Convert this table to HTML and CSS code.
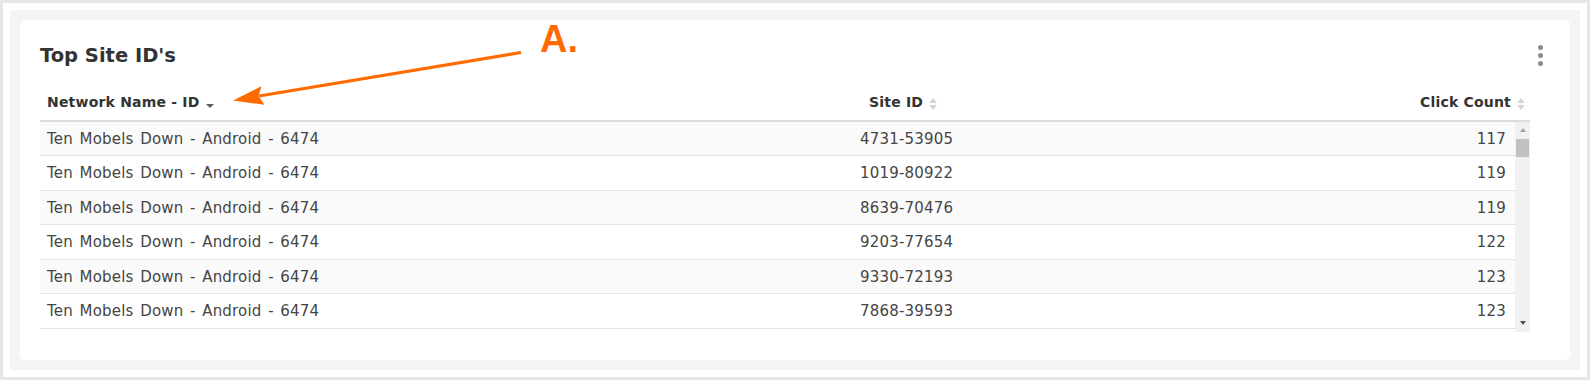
FILE: index.html
```html
<!DOCTYPE html>
<html lang="en">
<head>
<meta charset="utf-8">
<title>Top Site ID's</title>
<link rel="stylesheet" href="styles.css">
</head>
<body>
<div class="outer">
  <div class="panel">
    <section class="card">
      <div class="card-head">
        <h2 class="title">Top Site ID's</h2>
        <div class="kebab" aria-label="More options"><span></span><span></span><span></span></div>
      </div>
      <div class="table">
        <div class="thead">
          <div class="th th-1"><span class="th-label">Network Name - ID</span><span class="sort-down"></span></div>
          <div class="th th-2"><span class="th-label">Site ID</span><span class="sort-both"><i class="up"></i><i class="down"></i></span></div>
          <div class="th th-3"><span class="th-label">Click Count</span><span class="sort-both"><i class="up"></i><i class="down"></i></span></div>
        </div>
        <div class="tbody">
          <div class="rows">
            <div class="row"><div class="td td-1">Ten Mobels Down - Android - 6474</div><div class="td td-2">4731-53905</div><div class="td td-3">117</div></div>
            <div class="row"><div class="td td-1">Ten Mobels Down - Android - 6474</div><div class="td td-2">1019-80922</div><div class="td td-3">119</div></div>
            <div class="row"><div class="td td-1">Ten Mobels Down - Android - 6474</div><div class="td td-2">8639-70476</div><div class="td td-3">119</div></div>
            <div class="row"><div class="td td-1">Ten Mobels Down - Android - 6474</div><div class="td td-2">9203-77654</div><div class="td td-3">122</div></div>
            <div class="row"><div class="td td-1">Ten Mobels Down - Android - 6474</div><div class="td td-2">9330-72193</div><div class="td td-3">123</div></div>
            <div class="row"><div class="td td-1">Ten Mobels Down - Android - 6474</div><div class="td td-2">7868-39593</div><div class="td td-3">123</div></div>
          </div>
          <div class="scrollbar">
            <div class="sb-btn"><i class="sb-up"></i></div>
            <div class="sb-thumb"></div>
            <div class="sb-fill"></div>
            <div class="sb-btn"><i class="sb-down"></i></div>
          </div>
        </div>
      </div>
    </section>
  </div>
</div>
<svg class="annotation" width="1590" height="380" viewBox="0 0 1590 380" aria-hidden="true">
  <line x1="521" y1="52.5" x2="259" y2="96" stroke="#ff6b00" stroke-width="3.2"/>
  <polygon points="233,100.5 261.5,86.3 258.5,96 264.5,104.8" fill="#ff6b00"/>
  <text x="540" y="52" class="anno-text">A.</text>
</svg>
</body>
</html>
```

FILE: styles.css
```css
html, body {
  margin: 0;
  padding: 0;
}

body {
  position: relative;
  width: 1590px;
  height: 380px;
  box-sizing: border-box;
  padding: 3px;
  background: #e6e6e6;
  font-family: "DejaVu Sans", sans-serif;
  overflow: hidden;
}

.outer {
  background: #ffffff;
  padding: 7px;
}

.panel {
  background: #f4f4f4;
  padding: 10px;
}

.card {
  background: #ffffff;
  border-radius: 5px;
  height: 340px;
  box-sizing: border-box;
  padding: 24.5px 20px 0 20px;
}

.card-head {
  display: flex;
  justify-content: space-between;
  align-items: center;
}

.title {
  margin: 0;
  font-size: 19.5px;
  font-weight: bold;
  color: #333333;
  line-height: 21.5px;
}

.kebab {
  width: 20px;
  display: flex;
  flex-direction: column;
  align-items: center;
  gap: 3px;
}

.kebab span {
  width: 5px;
  height: 5px;
  border-radius: 50%;
  background: #8c8c8c;
}

.table {
  margin-top: 27.5px;
  margin-right: 20px;
}

.thead {
  display: grid;
  grid-template-columns: 822px 1fr auto;
  padding-bottom: 9px;
  border-bottom: 2px solid #dddddd;
}

.th {
  display: flex;
  align-items: flex-start;
  font-size: 14px;
  font-weight: bold;
  letter-spacing: 0.2px;
  color: #333333;
  line-height: 17px;
  height: 17px;
  white-space: nowrap;
}

.th-1, .th-2 {
  padding-left: 7px;
}

.th-3 {
  justify-content: flex-end;
  padding-right: 5px;
}

.sort-down {
  width: 0;
  height: 0;
  margin-left: 6px;
  margin-top: 10px;
  border-left: 4.5px solid transparent;
  border-right: 4.5px solid transparent;
  border-top: 4px solid #5c5c5c;
}

.sort-both {
  display: flex;
  flex-direction: column;
  gap: 2px;
  margin-left: 6px;
  margin-top: 4px;
}

.sort-both i {
  display: block;
  width: 0;
  height: 0;
  border-left: 4.5px solid transparent;
  border-right: 4.5px solid transparent;
}

.sort-both .up {
  border-bottom: 5px solid #d4d4d4;
}

.sort-both .down {
  border-top: 5px solid #d4d4d4;
}

.tbody {
  display: flex;
  height: 210px;
  overflow: hidden;
}

.rows {
  flex: 1;
  overflow: hidden;
}

.row {
  display: grid;
  grid-template-columns: 813px 1fr auto;
  align-items: center;
  height: 34.5px;
  box-sizing: border-box;
  border-bottom: 1px solid #e2e2e2;
  padding-top: 1px;
  font-size: 15px;
  letter-spacing: 0.2px;
  color: #454545;
  white-space: nowrap;
}

.td-1 {
  word-spacing: 1.6px;
}

.row:nth-child(odd) {
  background: #fafafa;
}

.td-1, .td-2 {
  padding-left: 7px;
}

.td-3 {
  padding-right: 9px;
  text-align: right;
}

.scrollbar {
  width: 15px;
  background: #f1f1f1;
  display: flex;
  flex-direction: column;
}

.sb-btn {
  height: 17px;
  display: flex;
  align-items: center;
  justify-content: center;
}

.sb-up {
  width: 0;
  height: 0;
  border-left: 3.5px solid transparent;
  border-right: 3.5px solid transparent;
  border-bottom: 4px solid #a3a3a3;
}

.sb-down {
  width: 0;
  height: 0;
  border-left: 3.5px solid transparent;
  border-right: 3.5px solid transparent;
  border-top: 4px solid #505050;
}

.sb-thumb {
  height: 18px;
  margin: 0 1px;
  background: #c1c1c1;
}

.sb-fill {
  flex: 1;
}

.annotation {
  position: absolute;
  left: 0;
  top: 0;
  pointer-events: none;
}

.anno-text {
  font-family: "Liberation Sans", Arial, sans-serif;
  font-weight: bold;
  font-size: 38px;
  fill: #ff6b00;
}
```
